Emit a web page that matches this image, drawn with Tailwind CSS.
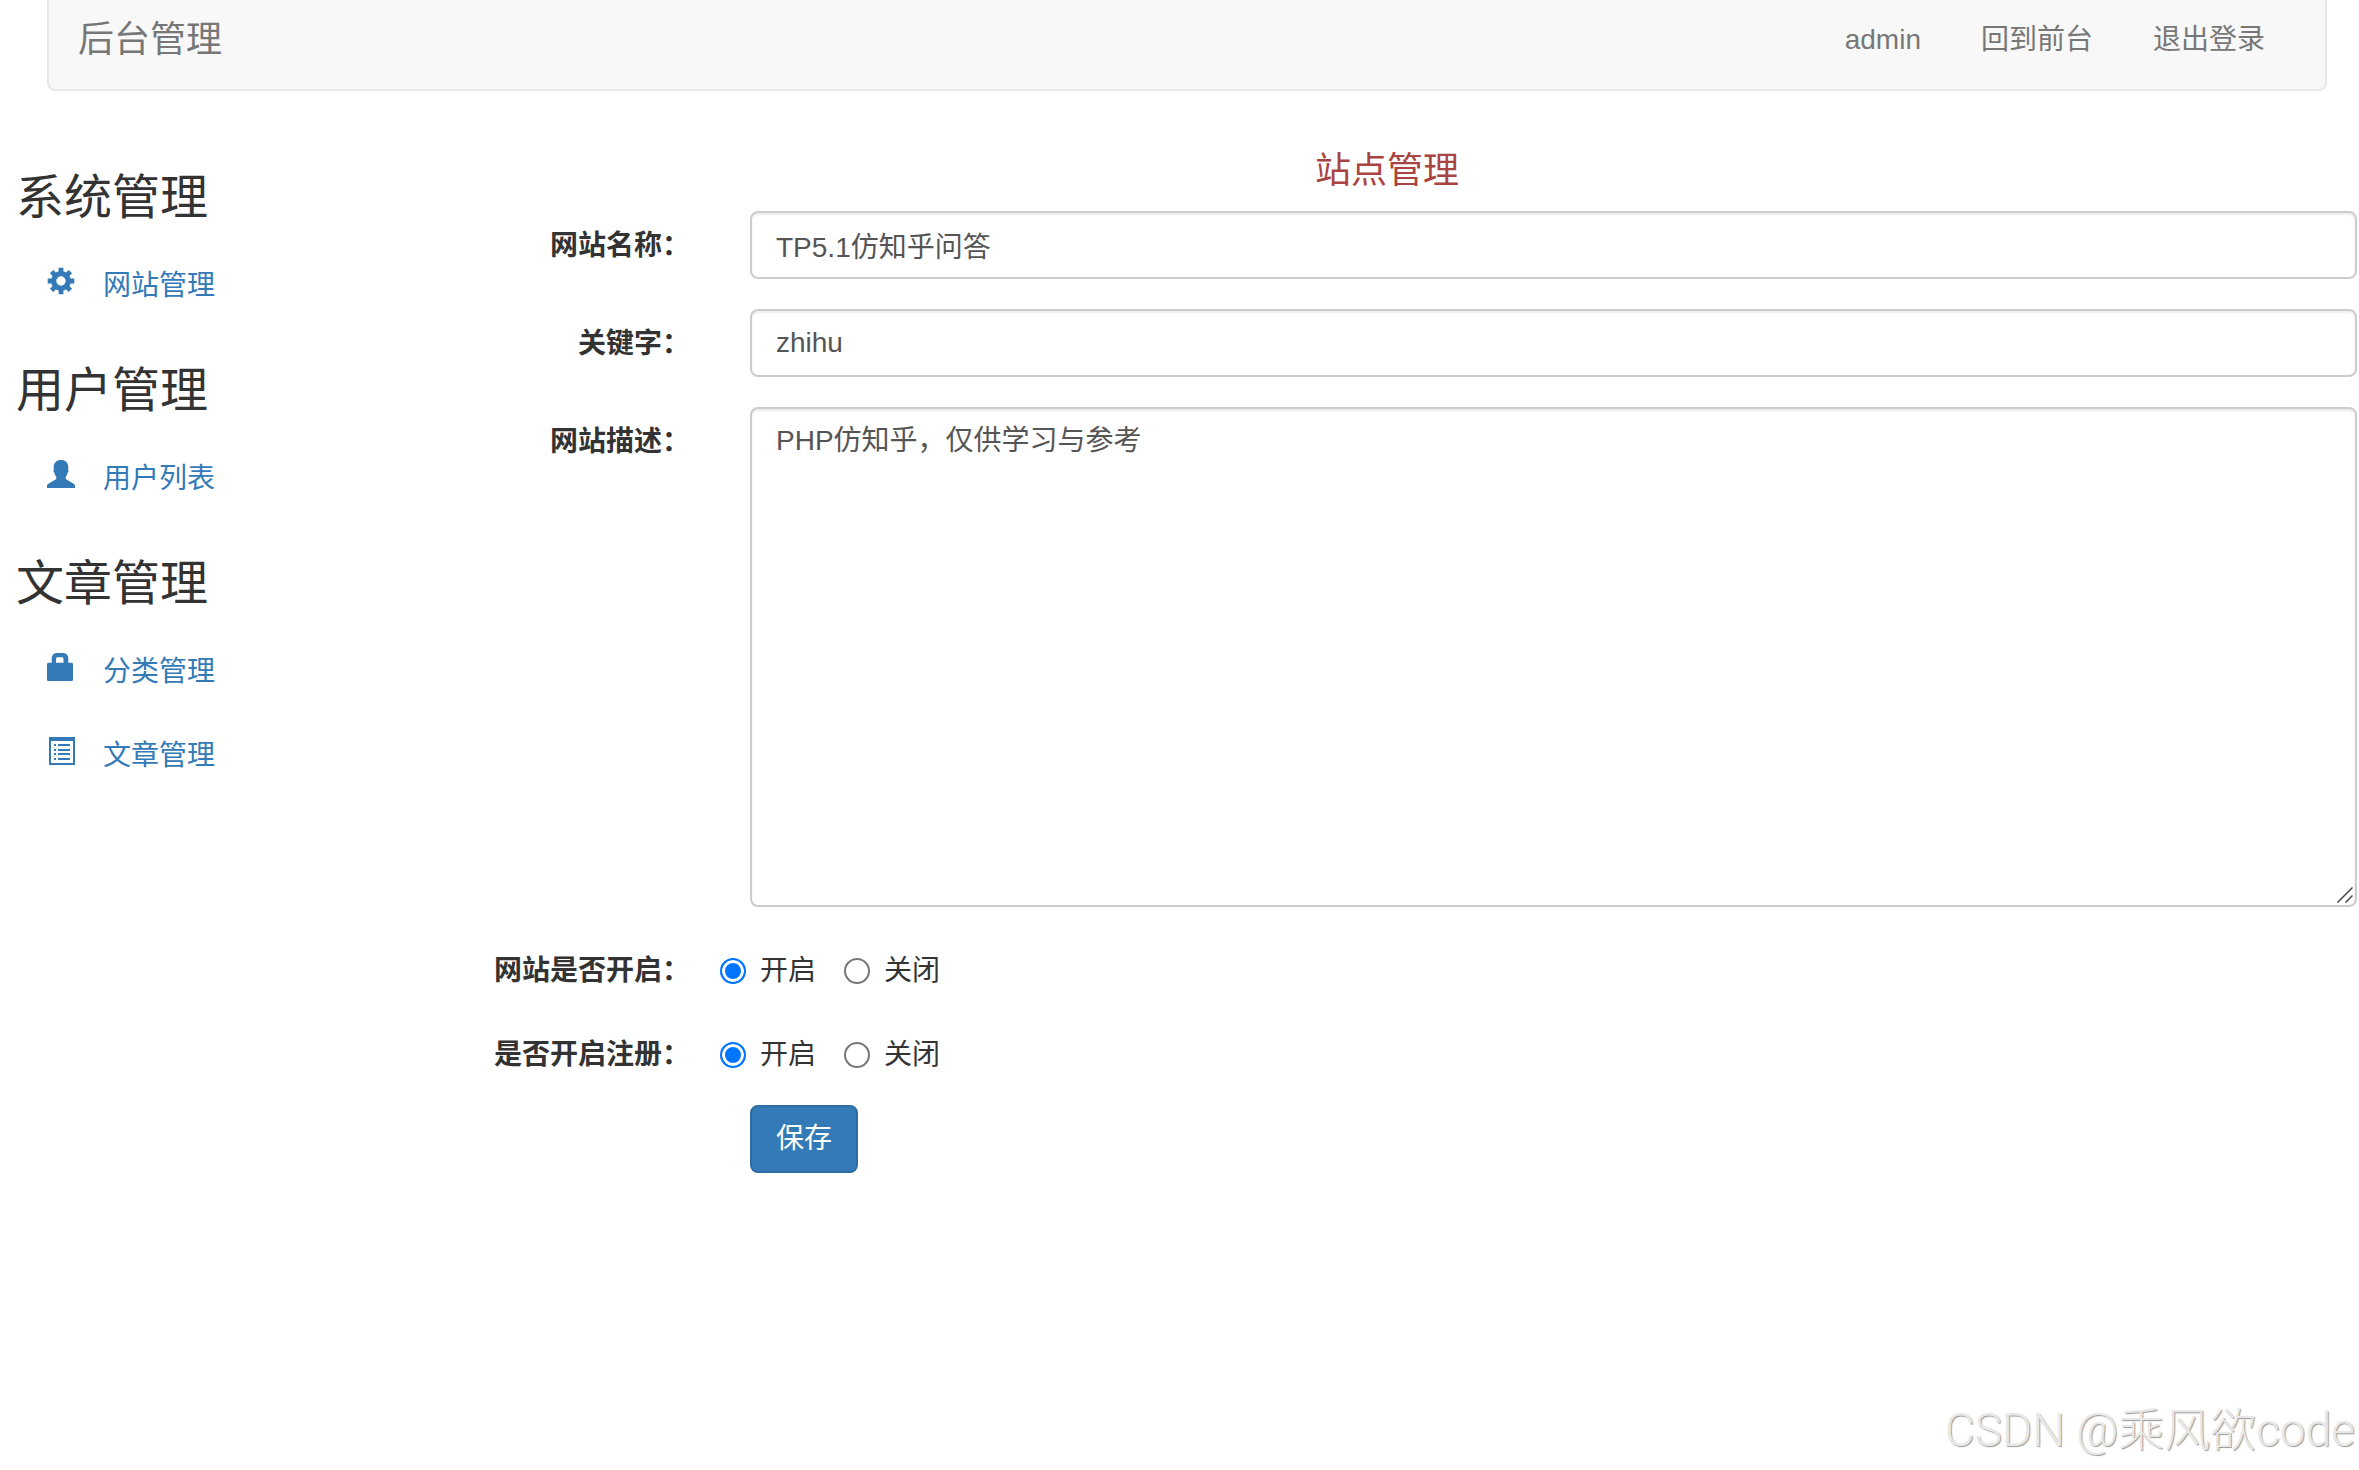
<!DOCTYPE html>
<html lang="zh-CN">
  <head>
    <meta charset="UTF-8" />
    <meta name="viewport" content="width=device-width, initial-scale=1.0" />
    <title>后台管理</title>
    <script src="https://cdn.jsdelivr.net/npm/@tailwindcss/browser@4"></script>
  </head>
  <body class="relative min-h-screen bg-white font-['Liberation_Sans','Noto_Sans_CJK_SC',sans-serif] text-[28px] leading-10 text-[#333]">
    <!-- 顶部导航 -->
    <header class="ml-[47px] mr-8 rounded-b-lg border-2 border-t-0 border-[#e7e7e7] bg-[#f8f8f8]">
      <nav class="flex items-center justify-between px-[29px] pt-5 pb-[29px] text-[#777]">
        <a href="#" class="text-4xl leading-10">后台管理</a>
        <div class="flex gap-15 pr-[31px]">
          <a href="#">admin</a>
          <a href="#">回到前台</a>
          <a href="#">退出登录</a>
        </div>
      </nav>
    </header>

    <div class="flex pt-[60px]">
      <!-- 侧边栏 -->
      <aside class="w-[415px] shrink-0 pl-4 pt-5 text-[#337ab7]">
        <section class="mb-10">
          <h2 class="mb-5 text-5xl leading-[53px] text-[#333]">系统管理</h2>
          <ul>
            <li>
              <a href="#" class="flex items-center gap-7 pt-[22px] pb-[18px] pl-[31px]">
                <svg class="-mt-2.5 size-7" viewBox="0 0 28 28" fill="none" stroke="currentColor">
                  <circle cx="14" cy="14" r="7.3" stroke-width="5.2" />
                  <path stroke-width="4.8" d="M14 .7V5M14 23v4.3M.7 14H5M23 14h4.3M4.6 4.6l3 3M20.4 20.4l3 3M4.6 23.4l3-3M20.4 7.6l3-3" />
                </svg>
                网站管理
              </a>
            </li>
          </ul>
        </section>

        <section class="mb-10">
          <h2 class="mb-5 text-5xl leading-[53px] text-[#333]">用户管理</h2>
          <ul>
            <li>
              <a href="#" class="flex items-center gap-7 pt-[22px] pb-[18px] pl-[31px]">
                <svg class="-mt-2.5 size-7" viewBox="0 0 28 28" fill="currentColor">
                  <path d="M14 0c4.5 0 7.3 2.7 7.3 7.2 0 .8-.1 1.5-.1 2.3.6 1 .4 2.4-.5 3.2-.4 1.5-1 2.9-2 4v1.6c0 .6.3 1 .8 1.3l7.1 4.1c.9.5 1.4 1.2 1.4 2.2V28H0v-2.1c0-1 .5-1.7 1.400-2.200l7.100-4.100c.5-.3.8-.7.8-1.300v-1.600c-1-1.100-1.600-2.500-2-4-.9-.8-1.100-2.200-.5-3.200 0-.8-.1-1.500-.1-2.300C6.700 2.700 9.500 0 14 0z" />
                </svg>
                用户列表
              </a>
            </li>
          </ul>
        </section>

        <section>
          <h2 class="mb-5 text-5xl leading-[53px] text-[#333]">文章管理</h2>
          <ul class="space-y-1">
            <li>
              <a href="#" class="flex items-center gap-7 pt-[22px] pb-[18px] pl-[31px]">
                <svg class="-mt-2.5 size-7" viewBox="0 0 28 28" fill="currentColor" fill-rule="evenodd">
                  <path d="M4.7 9.700V5.500C4.700 2.200 6.900 0 10.200 0h5.600c3.300 0 5.500 2.200 5.500 5.500v4.200h3.200c.9 0 1.500.6 1.500 1.500v15.200c0 .9-.7 1.600-1.600 1.600H1.600C.7 28 0 27.300 0 26.400V11.200c0-.9.6-1.500 1.500-1.500zM9 9.700h7.500V6c0-1-.6-1.700-1.700-1.700h-4.100C9.600 4.300 9 5 9 6z" />
                </svg>
                分类管理
              </a>
            </li>
            <li>
              <a href="#" class="flex items-center gap-7 pt-[22px] pb-[18px] pl-[31px]">
                <svg class="-mt-2.5 size-7" viewBox="0 0 28 28" fill="currentColor" fill-rule="evenodd">
                  <path d="M2 0H28v28H2zM4 4v22h22V4z" />
                  <path d="M7 7h2v2H7zM11 7h12v2h-12zM7 12h2v2H7zM11 12h12v2h-12zM7 16h2v2H7zM11 16h12v2h-12zM7 21h2v2H7zM11 21h12v2h-12z" />
                </svg>
                文章管理
              </a>
            </li>
          </ul>
        </section>
      </aside>

      <!-- 站点设置表单 -->
      <main class="min-w-0 flex-1">
        <h1 class="mb-5 text-center text-4xl leading-10 text-[#a94442]">站点管理</h1>
        <form class="space-y-[30px] pr-0.5">
          <div class="flex">
            <label for="name" class="w-[275px] shrink-0 pt-[15px] text-right font-bold">网站名称：</label>
            <div class="flex-1 pl-15">
              <input type="text" id="name" name="name" value="TP5.1仿知乎问答" class="block h-[68px] w-full rounded-lg border-2 border-[#ccc] px-6 text-[#555] shadow-[inset_0_2px_2px_rgba(0,0,0,0.075)]" />
            </div>
          </div>
          <div class="flex">
            <label for="keywords" class="w-[275px] shrink-0 pt-[15px] text-right font-bold">关键字：</label>
            <div class="flex-1 pl-15">
              <input type="text" id="keywords" name="keywords" value="zhihu" class="block h-[68px] w-full rounded-lg border-2 border-[#ccc] px-6 text-[#555] shadow-[inset_0_2px_2px_rgba(0,0,0,0.075)]" />
            </div>
          </div>
          <div class="flex">
            <label for="desc" class="w-[275px] shrink-0 pt-[15px] text-right font-bold">网站描述：</label>
            <div class="flex-1 pl-15">
              <div class="relative">
                <textarea id="desc" name="desc" class="block h-[500px] w-full resize-none rounded-lg border-2 border-[#ccc] px-6 py-3 text-[#555] shadow-[inset_0_2px_2px_rgba(0,0,0,0.075)]">PHP仿知乎，仅供学习与参考</textarea>
                <svg class="absolute bottom-1 right-1 size-4" viewBox="0 0 16 16" fill="none" stroke="#444" stroke-width="1.5">
                  <path d="M.5 15.5l15-15M8.5 15.5l7-7" />
                </svg>
              </div>
            </div>
          </div>
          <fieldset class="flex pt-3.5" aria-labelledby="site-open">
            <span id="site-open" class="w-[275px] shrink-0 text-right font-bold">网站是否开启：</span>
            <div class="flex gap-7 pl-[30px]">
              <label class="flex items-center gap-3.5">
                <input type="radio" name="is_open" value="1" checked class="size-[26px] appearance-none rounded-full border-2 border-[#767676] checked:border-[#0075ff] checked:bg-[#0075ff] checked:shadow-[inset_0_0_0_3px_#fff]" />开启
              </label>
              <label class="flex items-center gap-3.5">
                <input type="radio" name="is_open" value="0" class="size-[26px] appearance-none rounded-full border-2 border-[#767676] checked:border-[#0075ff] checked:bg-[#0075ff] checked:shadow-[inset_0_0_0_3px_#fff]" />关闭
              </label>
            </div>
          </fieldset>
          <fieldset class="flex pt-3.5" aria-labelledby="site-reg">
            <span id="site-reg" class="w-[275px] shrink-0 text-right font-bold">是否开启注册：</span>
            <div class="flex gap-7 pl-[30px]">
              <label class="flex items-center gap-3.5">
                <input type="radio" name="is_reg" value="1" checked class="size-[26px] appearance-none rounded-full border-2 border-[#767676] checked:border-[#0075ff] checked:bg-[#0075ff] checked:shadow-[inset_0_0_0_3px_#fff]" />开启
              </label>
              <label class="flex items-center gap-3.5">
                <input type="radio" name="is_reg" value="0" class="size-[26px] appearance-none rounded-full border-2 border-[#767676] checked:border-[#0075ff] checked:bg-[#0075ff] checked:shadow-[inset_0_0_0_3px_#fff]" />关闭
              </label>
            </div>
          </fieldset>
          <div class="pl-[335px]">
            <button type="submit" class="block rounded-lg border-2 border-[#2e6da4] bg-[#337ab7] px-6 py-3 text-white">保存</button>
          </div>
        </form>
      </main>
    </div>

    <!-- 水印 -->
    <div class="absolute bottom-3.5 right-1 font-[Roboto,'Noto_Sans_CJK_SC',sans-serif] text-[46px] leading-[52px] font-light text-[#e8e8e8] [text-shadow:1px_1px_1px_#999]">CSDN @乘风欲code</div>
  </body>
</html>
